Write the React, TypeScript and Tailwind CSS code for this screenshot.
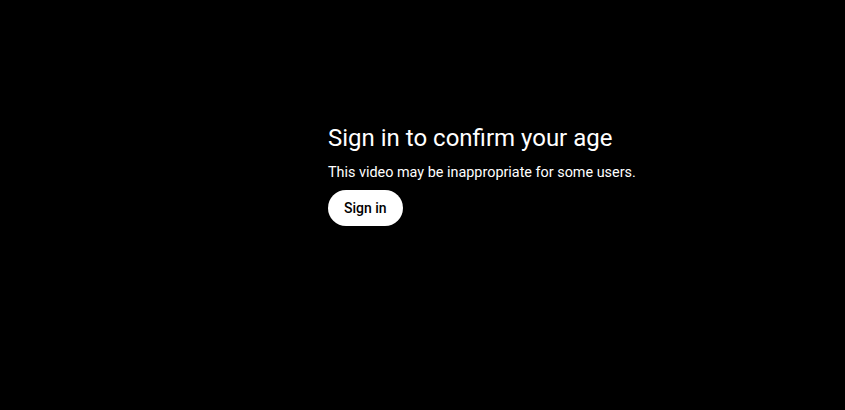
export default function App() {
  return (
    <div
      className="w-[845px] h-[410px] bg-black text-white"
      style={{ fontFamily: 'Roboto, Arial, sans-serif' }}
    >
      <div className="pl-[328px] pt-[123px] flex flex-col items-start">
        <h1 className="text-[24px] leading-[30px] font-normal">Sign in to confirm your age</h1>
        <p className="mt-[10px] text-[14.4px] leading-[20px]">
          This video may be inappropriate for some users.
        </p>
        <button className="mt-[7px] h-[36px] px-[16px] rounded-full bg-white text-black text-[14px] font-medium">
          Sign in
        </button>
      </div>
    </div>
  );
}
